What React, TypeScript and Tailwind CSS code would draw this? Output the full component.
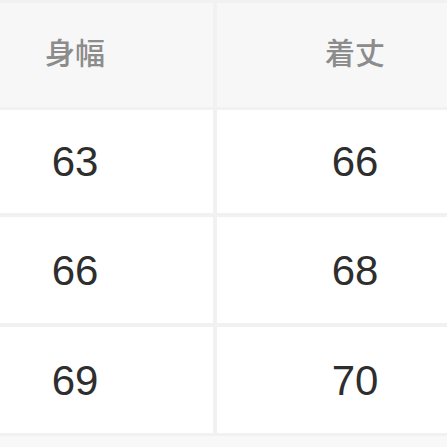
const rows = [
  ["63", "66"],
  ["66", "68"],
  ["69", "70"],
];

export default function App() {
  return (
    <div
      className="w-[447px] h-[447px] overflow-hidden bg-[#f1f1f1]"
      style={{ fontFamily: '"Liberation Sans", "Noto Sans CJK JP", sans-serif' }}
    >
      <div className="-ml-[63px] w-[560px] pt-[3px] flex flex-col gap-[3px]">
        <div className="grid grid-cols-[276px_276px] gap-x-[4px] h-[104px]">
          {["身幅", "着丈"].map((h) => (
            <div
              key={h}
              className="bg-[#f7f7f7] flex items-center justify-center pb-[7px] text-[30px] font-medium text-[#8c8c8c]"
              style={{ fontFamily: '"Noto Sans CJK JP", sans-serif' }}
            >
              {h}
            </div>
          ))}
        </div>
        {rows.map((r, i) => (
          <div
            key={i}
            className={`grid grid-cols-[276px_276px] gap-x-[4px] ${i === 0 ? "h-[103px]" : "h-[106px]"} ${i > 0 ? "mt-px" : ""}`}
          >
            {r.map((v, j) => (
              <div
                key={j}
                className="bg-white flex items-center justify-center text-[42px] text-[#2e2e2e]"
              >
                {v}
              </div>
            ))}
          </div>
        ))}
        <div className="h-[20px] bg-[#f8f8f8]" />
      </div>
    </div>
  );
}
